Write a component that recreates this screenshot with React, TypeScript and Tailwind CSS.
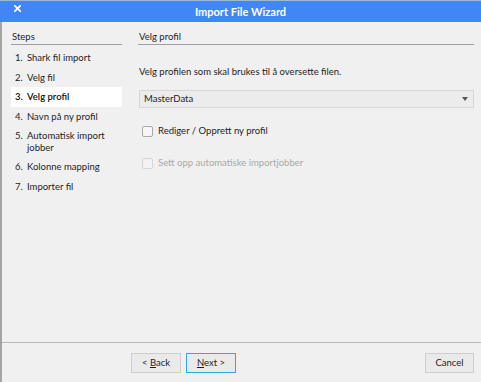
const steps = [
  { n: "1.", label: ["Shark fil import"] },
  { n: "2.", label: ["Velg fil"] },
  { n: "3.", label: ["Velg profil"], active: true },
  { n: "4.", label: ["Navn på ny profil"] },
  { n: "5.", label: ["Automatisk import", "jobber"] },
  { n: "6.", label: ["Kolonne mapping"] },
  { n: "7.", label: ["Importer fil"] },
];

function Checkbox({ label, disabled }: { label: string; disabled?: boolean }) {
  return (
    <div className="flex items-center gap-[5px] pl-[4px]">
      <span
        className={
          disabled
            ? "w-[11px] h-[11px] rounded-[2px] border border-[#d6d6d6] bg-[#f3f3f3]"
            : "w-[11px] h-[11px] rounded-[2px] border border-[#a8a8a8] bg-[#f6f6f6]"
        }
      />
      <span className={disabled ? "text-[#a9a9a9]" : "text-[#1e1e1e]"}>{label}</span>
    </div>
  );
}

function Button({ children, focused, w = "w-[50px]" }: { children: React.ReactNode; focused?: boolean; w?: string }) {
  return (
    <button
      className={
        (focused ? "border-[#35a4ea] " : "border-[#cdcdcd] ") +
        w +
        " h-[20px] border bg-[#eaeaea] text-[9.5px] leading-none text-[#1e1e1e]"
      }
    >
      {children}
    </button>
  );
}

export default function App() {
  return (
    <div
      className="w-[481px] h-[382px] bg-[#f0f0f0] flex flex-col text-[9.5px] text-[#1e1e1e] overflow-hidden"
      style={{ fontFamily: 'Lato, "Open Sans", sans-serif' }}
    >
      {/* title bar */}
      <div className="relative h-[22px] bg-[#4285f4] border-t border-[#9db6dc] flex items-center justify-center">
        <svg className="absolute left-[14px] top-[4px]" width="7" height="7" viewBox="0 0 7 7">
          <path d="M0.8 0.8 L6.2 6.2 M6.2 0.8 L0.8 6.2" stroke="white" strokeWidth="1.9" strokeLinecap="square" />
        </svg>
        <span className="text-white font-bold text-[11px] leading-none">Import File Wizard</span>
      </div>

      <div className="flex-1 flex flex-col border-l-2 border-[#a4a4a4]">
        <div className="flex-1 flex pl-[9px] pr-[7px] pt-[8px]">
          {/* steps */}
          <div className="w-[111px] flex flex-col">
            <div className="leading-[14px] pl-[1px] border-b border-[#9f9f9f]">Steps</div>
            <div className="flex flex-col pt-[3px]">
              {steps.map((s) => (
                <div
                  key={s.n}
                  className={
                    s.active
                      ? "flex py-[4px] leading-[11.5px] bg-white font-semibold text-[#111]"
                      : "flex py-[4px] leading-[11.5px]"
                  }
                >
                  <span className="w-[16px] pl-[4px] shrink-0">{s.n}</span>
                  <div className="flex flex-col">
                    {s.label.map((l) => (
                      <span key={l} className="whitespace-nowrap">{l}</span>
                    ))}
                  </div>
                </div>
              ))}
            </div>
          </div>

          {/* content */}
          <div className="flex-1 ml-[16px] flex flex-col">
            <div className="leading-[14px] pl-[1px] border-b border-[#9f9f9f]">Velg profil</div>
            <div className="pl-[1px] mt-[19px] leading-[15px]">Velg profilen som skal brukes til å oversette filen.</div>
            <div className="mt-[11px] ml-[1px] h-[18px] border border-[#d6d6d6] bg-[#ececec] flex items-center justify-between pl-[4px] pr-[5px]">
              <span>MasterData</span>
              <span className="w-0 h-0 border-l-[3px] border-r-[3px] border-t-[4px] border-l-transparent border-r-transparent border-t-[#555]" />
            </div>
            <div className="mt-[17px] flex flex-col gap-[20px] leading-[12px]">
              <Checkbox label="Rediger / Opprett ny profil" />
              <Checkbox label="Sett opp automatiske importjobber" disabled />
            </div>
          </div>
        </div>

        {/* footer */}
        <div className="h-[40px] border-t border-[#b9b9b9] flex items-start pt-[10px] pl-[129px] pr-[7px]">
          <Button>
            &lt; <span className="underline">B</span>ack
          </Button>
          <div className="ml-[5px]">
            <Button focused>
              <span className="underline">N</span>ext &gt;
            </Button>
          </div>
          <div className="flex-1" />
          <Button w="w-[49px]">Cancel</Button>
        </div>
      </div>
    </div>
  );
}
